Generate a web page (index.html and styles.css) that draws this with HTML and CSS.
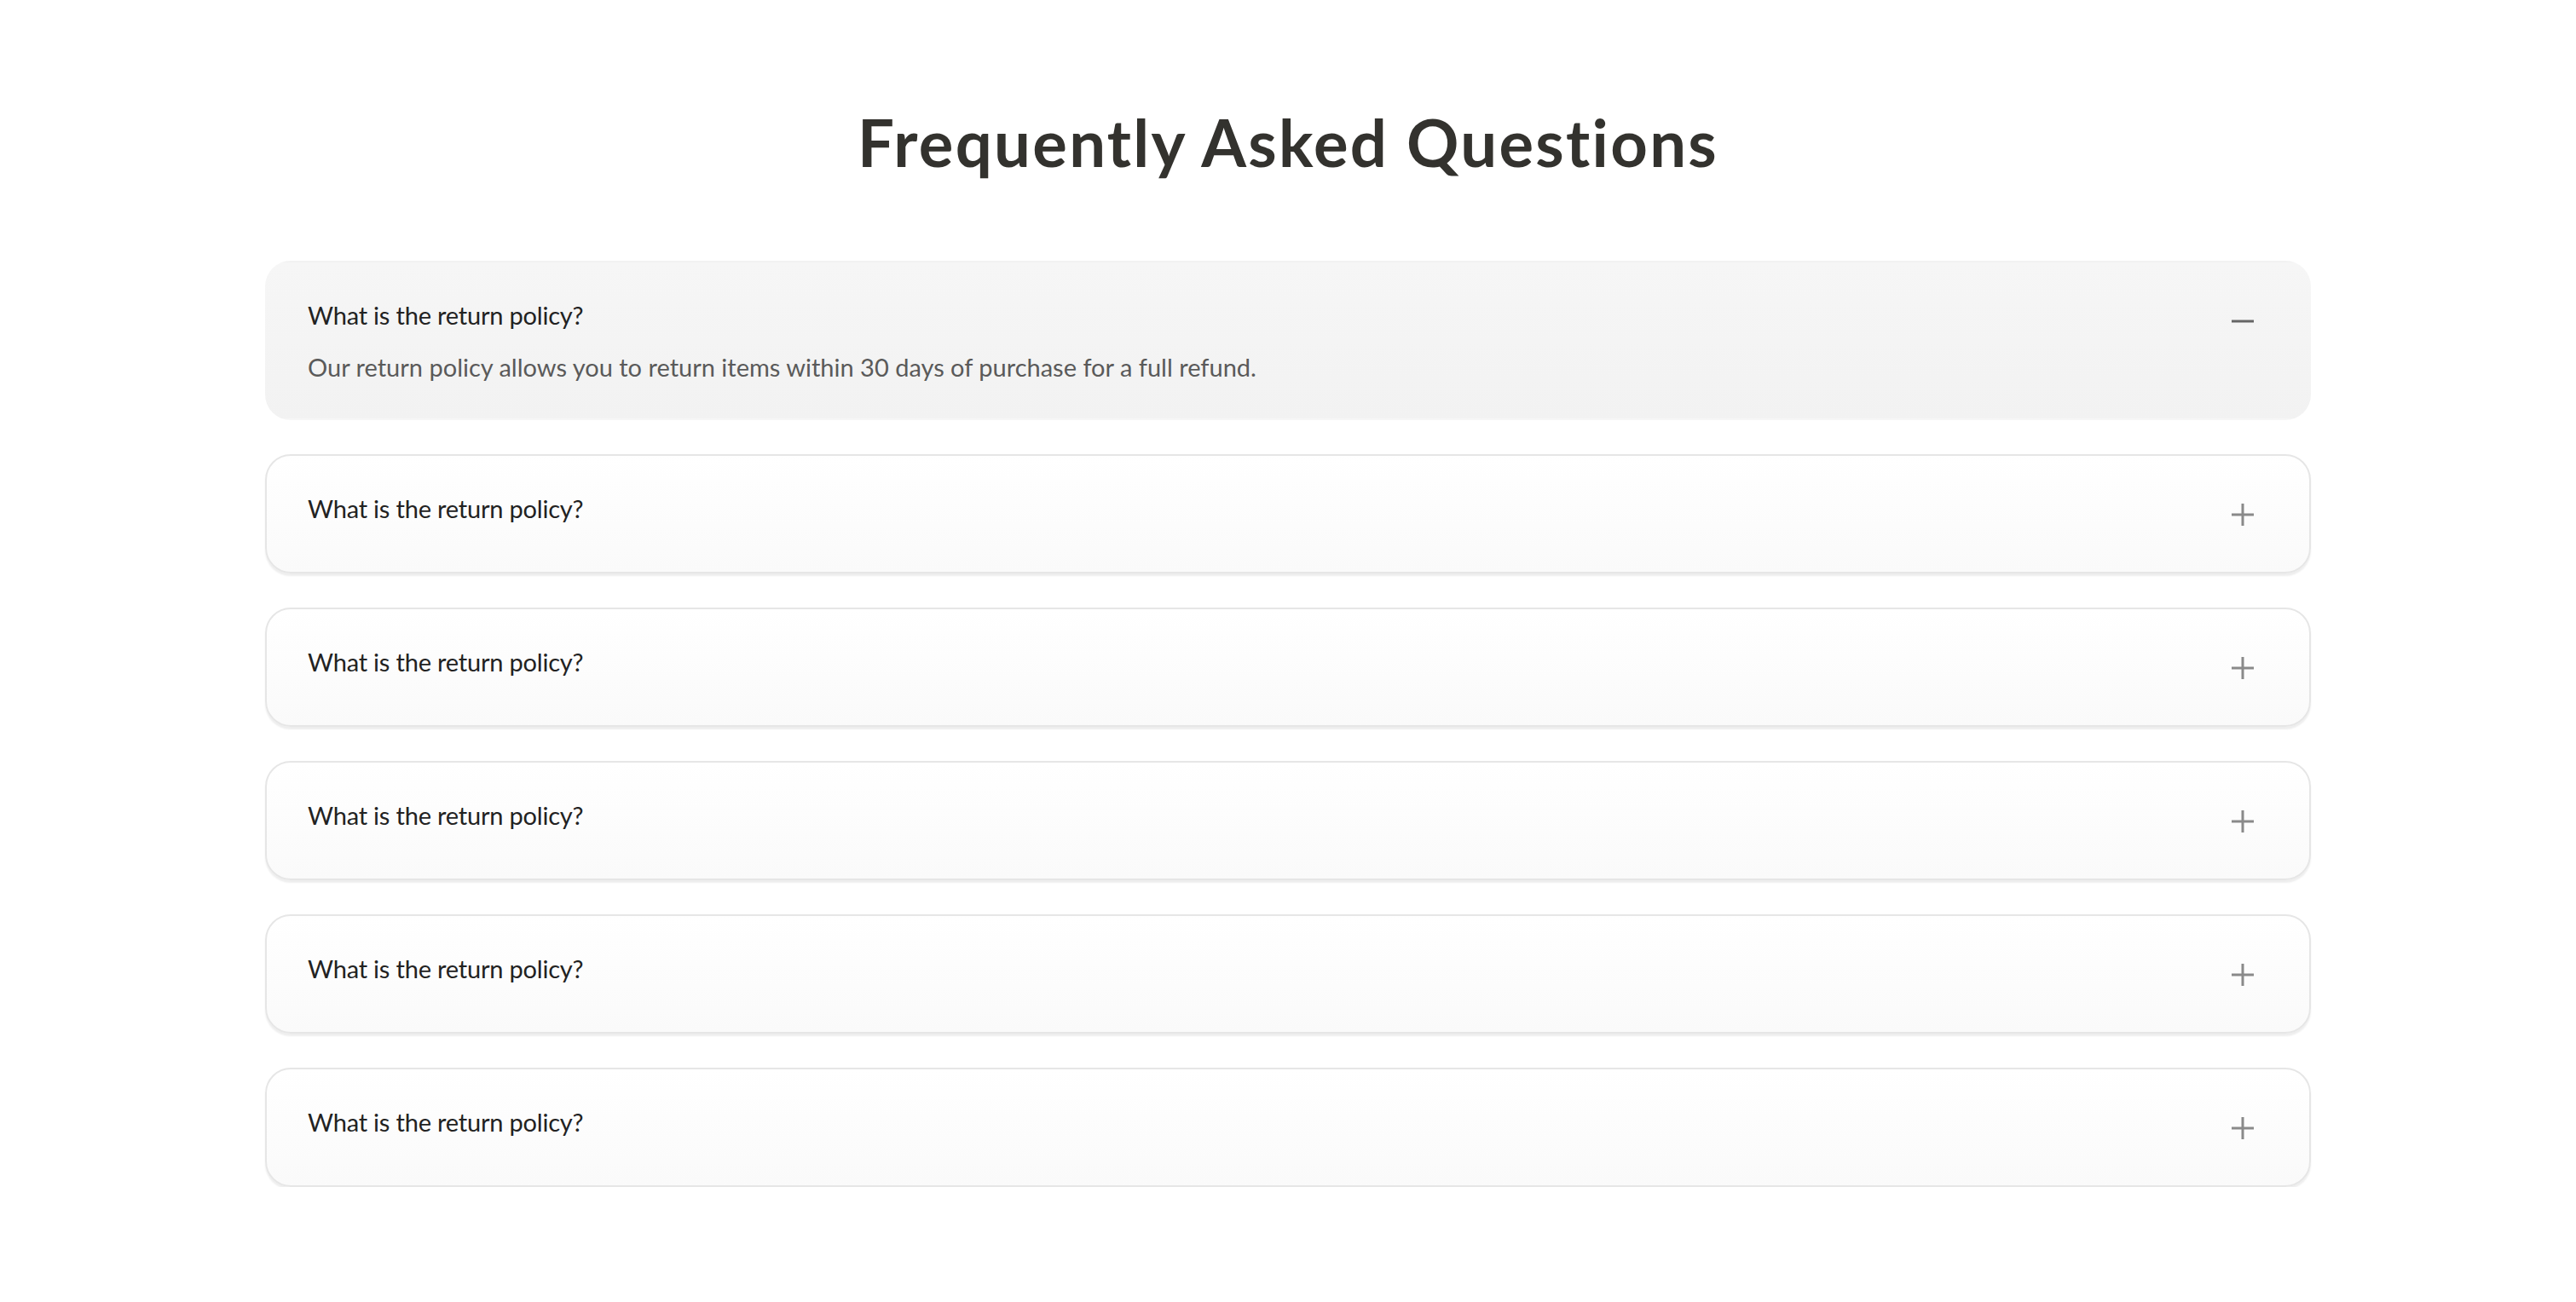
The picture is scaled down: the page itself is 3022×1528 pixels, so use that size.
FILE: index.html
```html
<!DOCTYPE html>
<html lang="en">
<head>
<meta charset="utf-8">
<title>FAQ</title>
<link rel="stylesheet" href="styles.css">
</head>
<body>
<main class="faq">
  <h1 class="faq-title">Frequently Asked Questions</h1>
  <div class="faq-list">
    <div class="faq-item open">
      <div class="faq-row">
        <span class="faq-q">What is the return policy?</span>
        <svg class="faq-icon minus" width="26" height="26" viewBox="0 0 26 26"><path d="M0 13H26" stroke="currentColor" stroke-width="3"/></svg>
      </div>
      <p class="faq-a">Our return policy allows you to return items within 30 days of purchase for a full refund.</p>
    </div>
    <div class="faq-item">
      <div class="faq-row">
        <span class="faq-q">What is the return policy?</span>
        <svg class="faq-icon plus" width="26" height="26" viewBox="0 0 26 26"><path d="M0 13H26M13 0V26" stroke="currentColor" stroke-width="3"/></svg>
      </div>
    </div>
    <div class="faq-item">
      <div class="faq-row">
        <span class="faq-q">What is the return policy?</span>
        <svg class="faq-icon plus" width="26" height="26" viewBox="0 0 26 26"><path d="M0 13H26M13 0V26" stroke="currentColor" stroke-width="3"/></svg>
      </div>
    </div>
    <div class="faq-item">
      <div class="faq-row">
        <span class="faq-q">What is the return policy?</span>
        <svg class="faq-icon plus" width="26" height="26" viewBox="0 0 26 26"><path d="M0 13H26M13 0V26" stroke="currentColor" stroke-width="3"/></svg>
      </div>
    </div>
    <div class="faq-item">
      <div class="faq-row">
        <span class="faq-q">What is the return policy?</span>
        <svg class="faq-icon plus" width="26" height="26" viewBox="0 0 26 26"><path d="M0 13H26M13 0V26" stroke="currentColor" stroke-width="3"/></svg>
      </div>
    </div>
    <div class="faq-item">
      <div class="faq-row">
        <span class="faq-q">What is the return policy?</span>
        <svg class="faq-icon plus" width="26" height="26" viewBox="0 0 26 26"><path d="M0 13H26M13 0V26" stroke="currentColor" stroke-width="3"/></svg>
      </div>
    </div>
  </div>
</main>
</body>
</html>
```

FILE: styles.css
```css
html, body {
  margin: 0;
  padding: 0;
  background: #ffffff;
}

body {
  font-family: "Lato", "Liberation Sans", sans-serif;
  color: #222222;
}

.faq {
  width: 2400px;
  margin: 0 auto;
  padding-top: 121px;
}

.faq-title {
  margin: 0;
  font-size: 76px;
  line-height: 1.2;
  font-weight: 700;
  letter-spacing: 2.3px;
  text-align: center;
  color: #33322e;
}

.faq-list {
  margin-top: 94px;
  display: flex;
  flex-direction: column;
  gap: 40px;
}

.faq-item {
  border: 2px solid #e6e6e6;
  border-radius: 30px;
  padding: 42px 65px 54px 48px;
  background: linear-gradient(#ffffff, #fafafa);
  box-shadow: 0 3px 2px rgba(0, 0, 0, 0.07);
}

.faq-item.open {
  border-color: transparent;
  background: linear-gradient(#f6f6f6, #f2f2f2);
  box-shadow: none;
  padding-bottom: 40px;
}

.faq-row {
  display: flex;
  justify-content: space-between;
  align-items: flex-start;
}

.faq-q {
  font-size: 29px;
  line-height: 40px;
  letter-spacing: -0.2px;
  color: #222222;
}

.faq-icon {
  margin-top: 14px;
  flex: none;
}

.faq-icon.plus {
  color: #8a8a8a;
}

.faq-icon.minus {
  color: #666666;
}

.faq-a {
  margin: 21px 0 0;
  font-size: 29px;
  line-height: 40px;
  color: #5a5a5a;
}
```
